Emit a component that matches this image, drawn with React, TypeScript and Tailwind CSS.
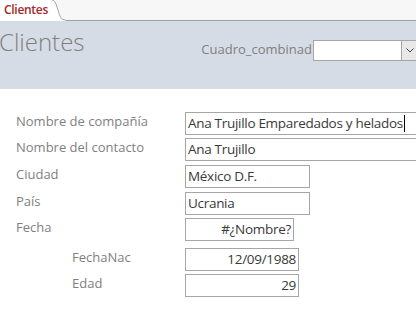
import React from "react";

const font = { fontFamily: '"Open Sans", "Noto Sans", sans-serif' };

function Row({
  label,
  value,
  indent = false,
  boxW,
  align = "left",
  mt,
  cursor = false,
}: {
  label: string;
  value: string;
  indent?: boolean;
  boxW: string;
  align?: "left" | "right";
  mt: string;
  cursor?: boolean;
}) {
  return (
    <div className={`flex items-center h-[23px] ${mt}`}>
      <div
        className={`w-[185px] shrink-0 text-[13px] text-[#7f7f7f] leading-none ${indent ? "pl-[72px]" : "pl-4"} -mt-[4px]`}
      >
        {label}
      </div>
      <div
        className={`${boxW} h-[23px] shrink-0 border border-[#a6a6a6] bg-white flex items-center px-[2px] text-[13.5px] tracking-[-0.3px] text-[#3a3a3a] whitespace-nowrap overflow-hidden ${align === "right" ? "justify-end" : ""}`}
      >
        <span className="leading-none">{value}</span>
        {cursor && <span className="ml-[1px] w-[1px] h-[17px] bg-black" />}
      </div>
    </div>
  );
}

export default function App() {
  return (
    <div className="w-[416px] h-[314px] bg-white overflow-hidden" style={font}>
      {/* tab strip */}
      <div className="h-[21px] bg-[#f7f7f7] border-b border-[#a0a0a0] relative">
        <div className="absolute left-0 top-0 h-[21px] flex">
          <div className="h-[21px] bg-white pl-[4px] pr-[2px] text-[12px] font-semibold text-[#a4262c] leading-[20px] tracking-[-0.3px]">
            Clientes
          </div>
          <svg width="16" height="21" viewBox="0 0 16 21" className="block">
            <path d="M0 0 L2 0 C5 0 6 4 8 10 C10 17 11 20 16 20 L16 21 L0 21 Z" fill="#ffffff" />
            <path d="M2 0 C5 0 6 4 8 10 C10 17 11 20 16 20" fill="none" stroke="#a0a0a0" strokeWidth="1" />
          </svg>
        </div>
      </div>
      {/* header band */}
      <div className="h-[68px] bg-[#d6dce5] flex items-start">
        <div className="text-[24px] text-[#7f7f7f] leading-none mt-[9px] -ml-[1px] font-light">Clientes</div>
        <div className="ml-auto flex items-center mt-[19px]">
          <span className="text-[13px] text-[#7f7f7f] leading-none -mt-[2px] mr-[1px]">Cuadro_combinad</span>
          <div className="w-[89px] h-[21px] bg-white border border-[#a6a6a6]" />
          <div className="w-[14px] h-[21px] bg-[#e8e8e8] border-y border-[#a6a6a6] flex items-center justify-end pr-[2px]">
            <svg width="8" height="5" viewBox="0 0 8 5">
              <path d="M0.5 0.5 L4 4 L7.5 0.5" fill="none" stroke="#444" strokeWidth="1" />
            </svg>
          </div>
        </div>
      </div>
      {/* form */}
      <div className="flex flex-col">
        <Row label="Nombre de compañía" value="Ana Trujillo Emparedados y helados" boxW="w-[240px]" mt="mt-[23px]" cursor />
        <Row label="Nombre del contacto" value="Ana Trujillo" boxW="w-[240px]" mt="mt-[3px]" />
        <Row label="Ciudad" value="México D.F." boxW="w-[125px]" mt="mt-[4px]" />
        <Row label="País" value="Ucrania" boxW="w-[125px]" mt="mt-[4px]" />
        <Row label="Fecha" value="#¿Nombre?" boxW="w-[109px]" align="right" mt="mt-[3px]" />
        <Row label="FechaNac" value="12/09/1988" boxW="w-[114px]" align="right" indent mt="mt-[7px]" />
        <Row label="Edad" value="29" boxW="w-[114px]" align="right" indent mt="mt-[3px]" />
      </div>
    </div>
  );
}
